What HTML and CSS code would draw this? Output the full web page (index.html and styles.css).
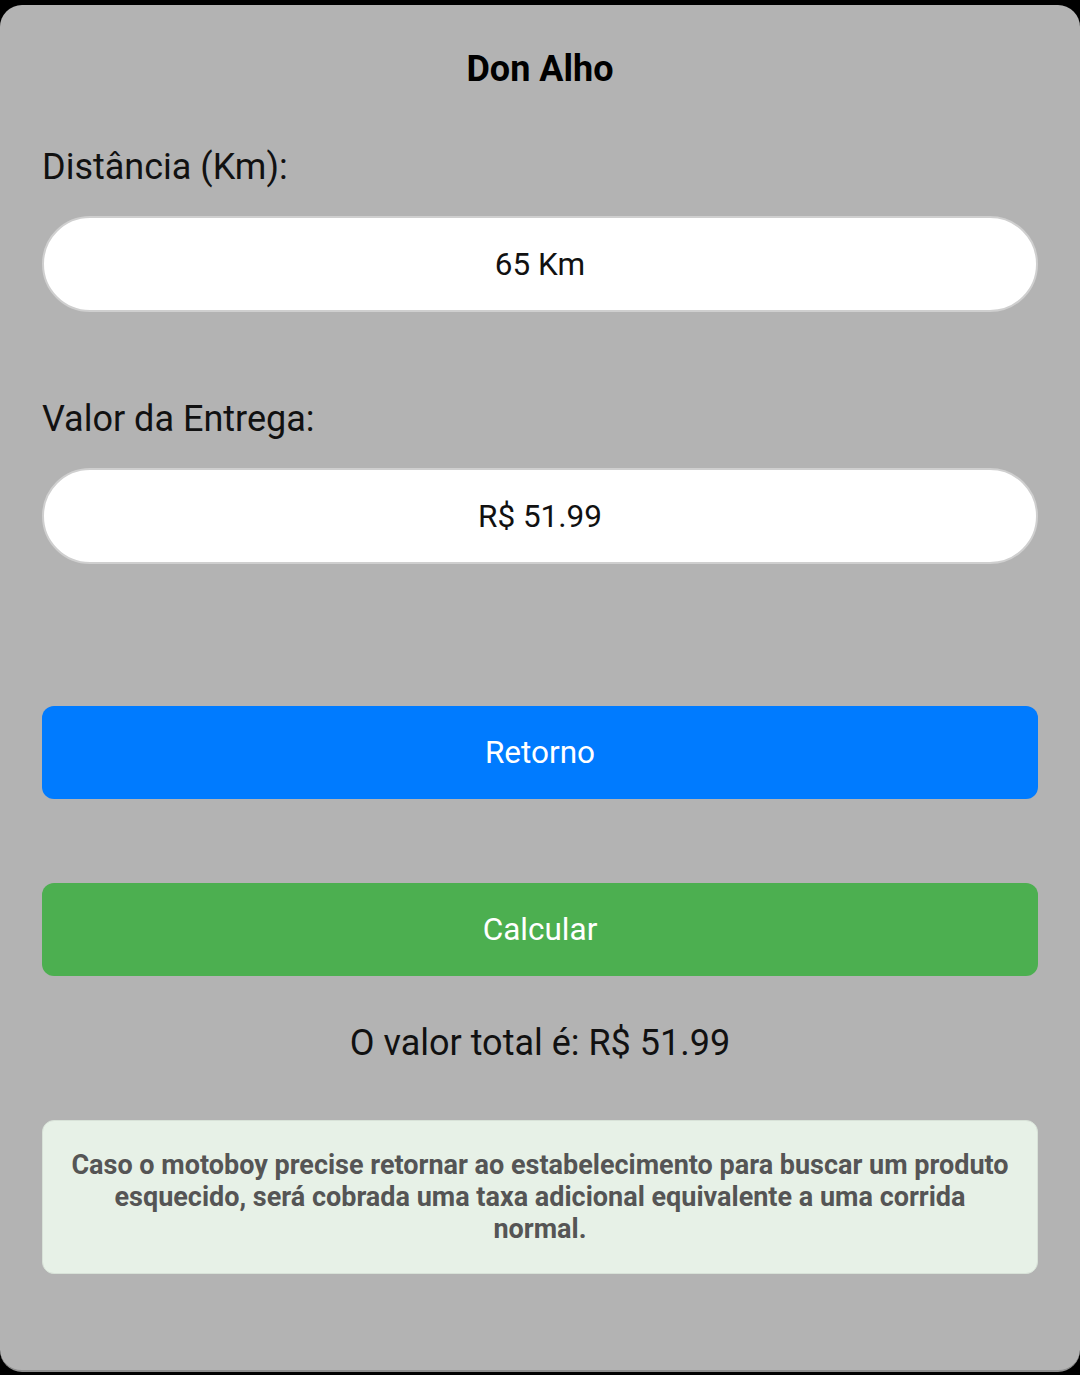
FILE: index.html
```html
<!DOCTYPE html>
<html lang="pt-BR">
<head>
<meta charset="utf-8">
<title>Don Alho</title>
<link rel="stylesheet" href="styles.css">
</head>
<body>
<main class="panel">
  <h1 class="title">Don Alho</h1>
  <label class="label label-first">Distância (Km):</label>
  <div class="field">65 Km</div>
  <label class="label label-second">Valor da Entrega:</label>
  <div class="field">R$ 51.99</div>
  <button class="btn btn-blue">Retorno</button>
  <button class="btn btn-green">Calcular</button>
  <p class="total">O valor total é: R$ 51.99</p>
  <div class="note">Caso o motoboy precise retornar ao estabelecimento para buscar um produto esquecido, será cobrada uma taxa adicional equivalente a uma corrida normal.</div>
</main>
</body>
</html>
```

FILE: styles.css
```css
html, body {
  margin: 0;
  padding: 0;
  background: #000;
  height: 1375px;
  overflow: hidden;
}
body {
  font-family: Roboto, "Liberation Sans", sans-serif;
  color: #111;
}
.panel {
  box-sizing: border-box;
  margin-top: 5px;
  height: 1367px;
  background: #b3b3b3;
  border-radius: 22px;
  padding: 43px 42px 0 42px;
  display: flex;
  flex-direction: column;
  border-bottom: 2px solid #8e8e8e;
}
.title {
  margin: 0;
  font-size: 36px;
  line-height: 42px;
  font-weight: 700;
  text-align: center;
  color: #000;
}
.label {
  display: block;
  font-size: 36px;
  line-height: 42px;
  color: #111;
  margin-bottom: 28px;
}
.label-first { margin-top: 56px; }
.label-second { margin-top: 86px; }
.field {
  box-sizing: border-box;
  height: 96px;
  border: 2px solid #cfcfcf;
  border-radius: 48px;
  background: #fff;
  display: flex;
  align-items: center;
  justify-content: center;
  font-size: 31.5px;
  color: #111;
}
.btn {
  box-sizing: border-box;
  height: 93px;
  border: none;
  border-radius: 12px;
  color: #fff;
  font-family: Roboto, "Liberation Sans", sans-serif;
  font-size: 31.5px;
  padding: 0;
}
.btn-blue {
  margin-top: 142px;
  background: #007bff;
}
.btn-green {
  margin-top: 84px;
  background: #4caf50;
}
.total {
  margin: 46px 0 0 0;
  font-size: 36px;
  line-height: 42px;
  text-align: center;
  color: #111;
}
.note {
  box-sizing: border-box;
  margin-top: 56px;
  height: 154px;
  background: #e7f1e7;
  border: 1px solid #d8e2d8;
  border-radius: 12px;
  padding: 28px 24px 0 24px;
  font-size: 27px;
  line-height: 32px;
  font-weight: 700;
  color: #555;
  text-align: center;
}
```
